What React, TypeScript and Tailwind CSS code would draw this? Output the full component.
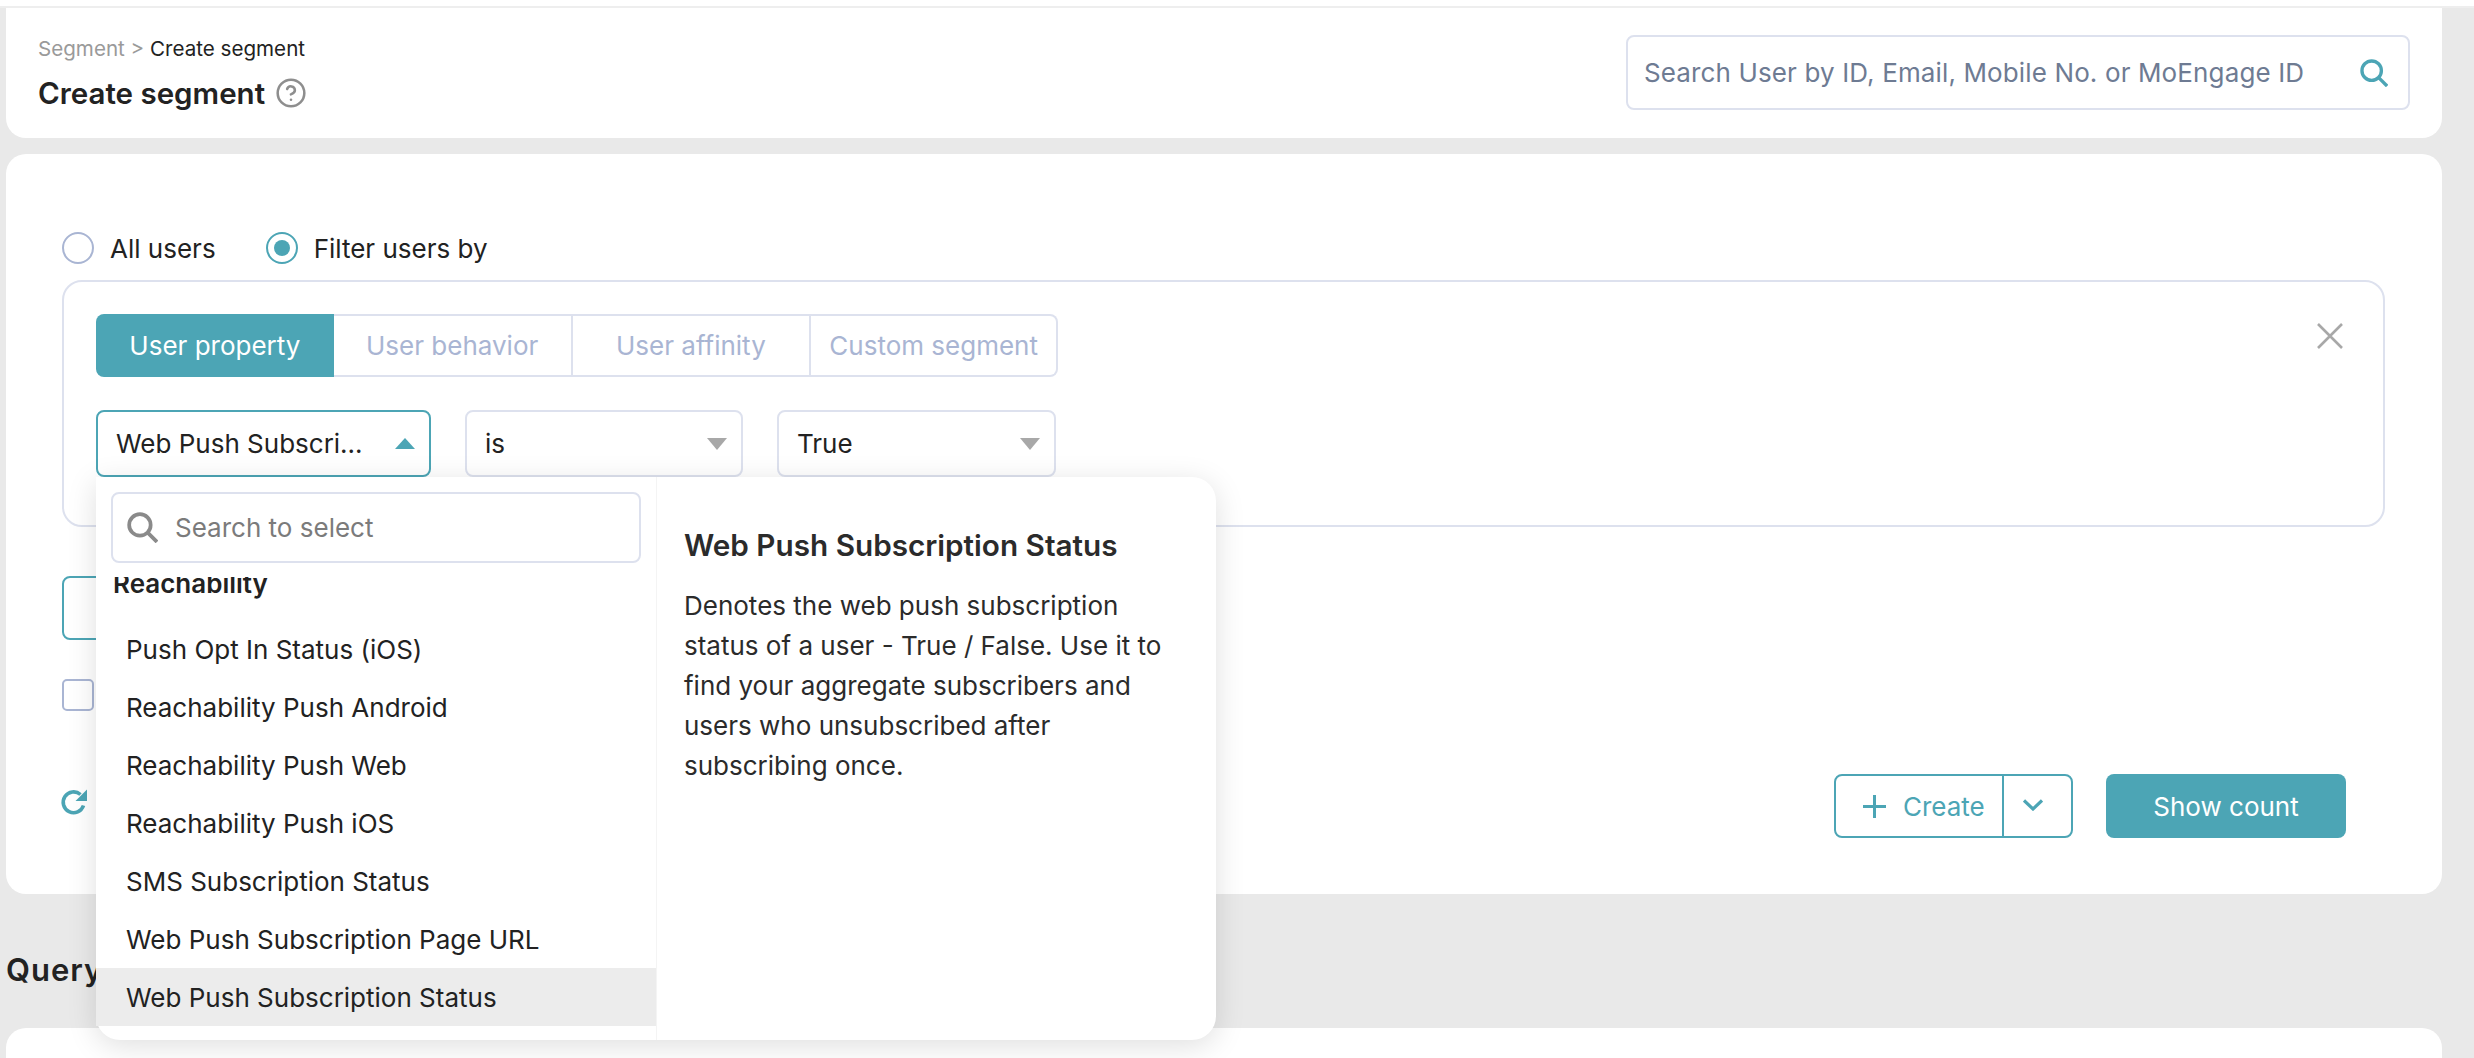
import { CircleHelp } from 'lucide-react'

const options = [
  'Push Opt In Status (iOS)',
  'Reachability Push Android',
  'Reachability Push Web',
  'Reachability Push iOS',
  'SMS Subscription Status',
  'Web Push Subscription Page URL',
]

const tabs = ['User behavior', 'User affinity', 'Custom segment']

function Lens({ className }: { className: string }) {
  return (
    <svg viewBox="0 0 30 30" fill="none" stroke="currentColor" strokeWidth="3.6" className={className}>
      <circle cx="12.5" cy="12.5" r="10.4" />
      <path d="M20 20 L29 29" />
    </svg>
  )
}

function Caret({ up }: { up?: boolean }) {
  return up ? (
    <span className="h-0 w-0 border-x-[10px] border-b-[11px] border-x-transparent border-b-[#4ca5b5]" />
  ) : (
    <span className="h-0 w-0 border-x-[10px] border-t-[12px] border-x-transparent border-t-[#a8a8a8]" />
  )
}

function OptionList() {
  return (
    <div className="absolute left-[-2px] top-[65px] z-10 flex h-[563px] w-[1120px] rounded-b-[24px] rounded-tr-[24px] bg-white shadow-[0_6px_30px_rgba(0,0,0,0.13)]">
      <div className="flex w-[560px] flex-col">
        <div className="px-[15px] pt-[15px]">
          <div className="flex h-[71px] w-[530px] items-center gap-[17px] rounded-lg border-2 border-[#dde1ee] pl-[14px]">
            <Lens className="h-[31px] w-[31px] text-[#8a8a8a]" />
            <input
              readOnly
              placeholder="Search to select"
              className="w-[400px] bg-transparent text-[26px] outline-none placeholder:text-[#7b7b7b]"
            />
          </div>
        </div>
        <div className="mt-[14px] overflow-hidden">
          <div className="-mt-[6px] h-[49px] pl-[17px] text-[26px] leading-[26px] font-semibold text-[#222]">Reachability</div>
          {options.map((option) => (
            <div key={option} className="flex h-[58px] items-center pl-[30px] text-[26px] text-[#222]">
              {option}
            </div>
          ))}
          <div className="flex h-[58px] items-center bg-[#ececec] pl-[30px] text-[26px] text-[#222]">Web Push Subscription Status</div>
        </div>
      </div>
      <div className="flex-1 border-l border-[#f4f4f4] pl-[27px] pt-[48px] text-[#2b2b2b]">
        <h3 className="text-[29.7px] leading-[40px] font-semibold">Web Push Subscription Status</h3>
        <p className="mt-[21px] text-[26px] leading-[40px]">
          Denotes the web push subscription
          <br />
          status of a user - True / False. Use it to
          <br />
          find your aggregate subscribers and
          <br />
          users who unsubscribed after
          <br />
          subscribing once.
        </p>
      </div>
    </div>
  )
}

export default function App() {
  return (
    <div className="h-[1058px] w-[2474px] overflow-hidden bg-[#e9e9e9] font-['Inter',sans-serif] text-[#222]">
      <div className="h-[6px] bg-white" />
      <div className="h-[2px] bg-[#eeeeee]" />

      <header className="ml-[6px] flex h-[130px] w-[2436px] items-start justify-between rounded-b-[20px] bg-white pl-[32px] pr-[32px]">
        <div className="pt-[29px]">
          <div className="text-[20.6px] leading-[24px]">
            <span className="text-[#9a9a9a]">Segment &gt;</span> <span className="text-[#222]">Create segment</span>
          </div>
          <div className="mt-[12px] flex items-center gap-[10px]">
            <h1 className="text-[29.5px] leading-[40px] font-semibold text-[#222]">Create segment</h1>
            <CircleHelp className="h-[32px] w-[32px] text-[#8e8e8e]" strokeWidth={1.9} />
          </div>
        </div>
        <div className="mt-[27px] flex h-[75px] w-[784px] items-center justify-between rounded-lg border-2 border-[#dde1ee] pl-[16px] pr-[20px]">
          <input
            readOnly
            placeholder="Search User by ID, Email, Mobile No. or MoEngage ID"
            className="w-[680px] bg-transparent text-[26px] tracking-[0.13px] outline-none placeholder:text-[#6e7b93]"
          />
          <Lens className="h-[28px] w-[28px] text-[#4ca5b5]" />
        </div>
      </header>

      <main className="ml-[6px] mt-[16px] h-[740px] w-[2436px] rounded-[20px] bg-white pl-[56px] pt-[78px]">
        <div className="flex h-[32px] items-center text-[26px]">
          <span className="h-[32px] w-[32px] rounded-full border-2 border-[#a9b5d3]" />
          <span className="ml-[16px]">All users</span>
          <span className="ml-[50px] flex h-[32px] w-[32px] items-center justify-center rounded-full border-2 border-[#4ca5b5]">
            <span className="h-[16px] w-[16px] rounded-full bg-[#4ca5b5]" />
          </span>
          <span className="ml-[16px]">Filter users by</span>
        </div>

        <section className="mt-[16px] h-[247px] w-[2323px] rounded-[20px] border-2 border-[#dde1ee] pl-[32px] pr-[40px] pt-[32px]">
          <div className="flex items-start justify-between">
            <div className="flex h-[63px] w-[962px] text-[26px]">
              <div className="flex w-[238px] items-center justify-center rounded-l-lg bg-[#4ca5b5] text-white">User property</div>
              {tabs.map((tab, i) => (
                <div
                  key={tab}
                  className={
                    i === 2
                      ? 'flex w-[247px] items-center justify-center rounded-r-lg border-2 border-l-0 border-[#dde1ee] text-[#a9b5d3]'
                      : 'flex w-[239px] items-center justify-center border-2 border-l-0 border-[#dde1ee] text-[#a9b5d3]'
                  }
                >
                  {tab}
                </div>
              ))}
            </div>
            <svg viewBox="0 0 26 26" fill="none" stroke="#a8a8a8" strokeWidth="2.6" className="mt-[9px] h-[26px] w-[26px]">
              <path d="M1 1 L25 25 M25 1 L1 25" />
            </svg>
          </div>

          <div className="mt-[33px] flex text-[26px]">
            <div className="relative flex h-[67px] w-[335px] items-center justify-between rounded-lg border-2 border-[#4ca5b5] pl-[18px] pr-[14px]">
              Web Push Subscri...
              <Caret up />
              <OptionList />
            </div>
            <div className="ml-[34px] flex h-[67px] w-[278px] items-center justify-between rounded-lg border-2 border-[#dde1ee] pl-[18px] pr-[14px]">
              is
              <Caret />
            </div>
            <div className="ml-[34px] flex h-[67px] w-[279px] items-center justify-between rounded-lg border-2 border-[#dde1ee] pl-[18px] pr-[14px]">
              True
              <Caret />
            </div>
          </div>
        </section>

        <div className="mt-[49px] h-[64px] w-[150px] rounded-lg border-2 border-[#4ca5b5]" />
        <div className="mt-[39px] h-[32px] w-[32px] rounded-[5px] border-2 border-[#a9b5d3]" />

        <div className="mt-[63px] flex h-[64px] items-center justify-between pr-[96px]">
          <svg viewBox="0 0 28 28" className="-mt-[8px] h-[28px] w-[28px] -translate-x-[2px] text-[#4ca5b5]" fill="none">
            <path d="M23.5 17.5A10.4 10.4 0 1 1 20.5 6.5" stroke="currentColor" strokeWidth="3.6" />
            <path d="M27 1.5V13H15.5Z" fill="currentColor" />
          </svg>
          <div className="flex gap-[33px] text-[26px]">
            <div className="flex h-[64px] w-[239px] rounded-lg border-2 border-[#4ca5b5] text-[#4ca5b5]">
              <div className="flex w-[168px] items-center border-r-2 border-[#4ca5b5] pl-[27px]">
                <svg viewBox="0 0 23 23" fill="none" stroke="currentColor" strokeWidth="3" className="h-[23px] w-[23px]">
                  <path d="M11.5 0 V23 M0 11.5 H23" />
                </svg>
                <span className="ml-[17px]">Create</span>
              </div>
              <div className="flex flex-1 items-center justify-center pr-[10px]">
                <svg viewBox="0 0 20 12" fill="none" stroke="currentColor" strokeWidth="3.2" className="-mt-[2px] h-[12px] w-[20px]">
                  <path d="M1 1.5 L10 10 L19 1.5" />
                </svg>
              </div>
            </div>
            <div className="flex h-[64px] w-[240px] items-center justify-center rounded-lg bg-[#4ca5b5] text-white">Show count</div>
          </div>
        </div>
      </main>

      <div className="ml-[6px] flex h-[134px] items-center pt-[18px] text-[31px] font-semibold tracking-[1px] text-[#222]">Query</div>
      <div className="ml-[6px] h-[60px] w-[2436px] rounded-t-[20px] bg-white" />
    </div>
  )
}
